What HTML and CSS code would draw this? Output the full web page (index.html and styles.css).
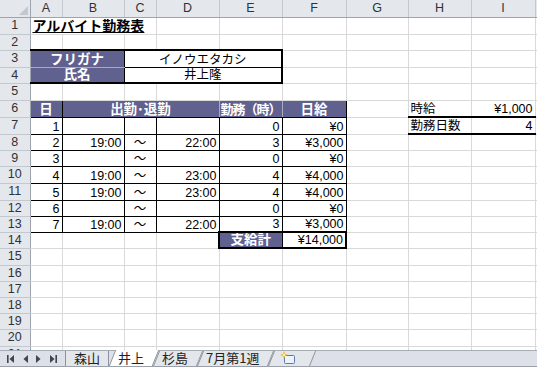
FILE: index.html
```html
<!DOCTYPE html>
<html lang="ja">
<head>
<meta charset="utf-8">
<title>アルバイト勤務表</title>
<link rel="stylesheet" href="styles.css">
</head>
<body>
<div class="sheet">
<table class="grid">
<colgroup>
<col class="w30"><col class="w32"><col class="w62"><col class="w32"><col class="w63"><col class="w63"><col class="w64"><col class="w62"><col class="w63"><col class="w64"><col class="w64">
</colgroup>
<tr class="hdr">
<th class="corner"><svg class="corner-tri" width="9" height="9" viewBox="0 0 9 9"><polygon points="9,0 9,9 0,9" fill="#c3c8cf"/></svg></th>
<th class="ch">A</th><th class="ch">B</th><th class="ch">C</th><th class="ch">D</th><th class="ch">E</th><th class="ch">F</th><th class="ch">G</th><th class="ch">H</th><th class="ch">I</th><th class="ch"></th>
</tr>
<tr class="h17"><th class="rh">1</th><td colspan="3" class="title"><span class="title-text">アルバイト勤務表</span></td><td></td><td></td><td></td><td></td><td></td><td></td><td></td></tr>
<tr class="h16"><th class="rh">2</th><td></td><td></td><td></td><td></td><td></td><td></td><td></td><td></td><td></td><td></td></tr>
<tr class="h17"><th class="rh">3</th><td colspan="2" class="p box-l3">フリガナ</td><td colspan="3" class="box-r3 ctr">イノウエタカシ</td><td></td><td></td><td></td><td></td><td></td></tr>
<tr class="h16"><th class="rh">4</th><td colspan="2" class="p box-l4">氏名</td><td colspan="3" class="box-r4 ctr">井上隆</td><td></td><td></td><td></td><td></td><td></td></tr>
<tr class="h17"><th class="rh">5</th><td></td><td></td><td></td><td></td><td></td><td></td><td></td><td></td><td></td><td></td></tr>
<tr class="h17"><th class="rh">6</th><td class="p hk-a">日</td><td colspan="3" class="p hk-m">出勤･退勤</td><td class="p hk-m work">勤務（時）</td><td class="p hk-f">日給</td><td></td><td class="ul2">時給</td><td class="ul2 num">¥1,000</td><td></td></tr>
<tr class="h17"><th class="rh">7</th><td class="k num">1</td><td class="k num"></td><td class="k ctr"></td><td class="k num"></td><td class="k num">0</td><td class="k num">¥0</td><td></td><td class="ul2">勤務日数</td><td class="ul2 num">4</td><td></td></tr>
<tr class="h16"><th class="rh">8</th><td class="k num">2</td><td class="k num">19:00</td><td class="k ctr">～</td><td class="k num">22:00</td><td class="k num">3</td><td class="k num">¥3,000</td><td></td><td></td><td></td><td></td></tr>
<tr class="h16"><th class="rh">9</th><td class="k num">3</td><td class="k num"></td><td class="k ctr">～</td><td class="k num"></td><td class="k num">0</td><td class="k num">¥0</td><td></td><td></td><td></td><td></td></tr>
<tr class="h17"><th class="rh">10</th><td class="k num">4</td><td class="k num">19:00</td><td class="k ctr">～</td><td class="k num">23:00</td><td class="k num">4</td><td class="k num">¥4,000</td><td></td><td></td><td></td><td></td></tr>
<tr class="h17"><th class="rh">11</th><td class="k num">5</td><td class="k num">19:00</td><td class="k ctr">～</td><td class="k num">23:00</td><td class="k num">4</td><td class="k num">¥4,000</td><td></td><td></td><td></td><td></td></tr>
<tr class="h16"><th class="rh">12</th><td class="k num">6</td><td class="k num"></td><td class="k ctr">～</td><td class="k num"></td><td class="k num">0</td><td class="k num">¥0</td><td></td><td></td><td></td><td></td></tr>
<tr class="h16"><th class="rh">13</th><td class="k num">7</td><td class="k num">19:00</td><td class="k ctr">～</td><td class="k num">22:00</td><td class="k num">3</td><td class="k num">¥3,000</td><td></td><td></td><td></td><td></td></tr>
<tr class="h16"><th class="rh">14</th><td></td><td></td><td></td><td></td><td class="p tot-l">支給計</td><td class="tot-r num">¥14,000</td><td></td><td></td><td></td><td></td></tr>
<tr class="h17"><th class="rh">15</th><td></td><td></td><td></td><td></td><td></td><td></td><td></td><td></td><td></td><td></td></tr>
<tr class="h16"><th class="rh">16</th><td></td><td></td><td></td><td></td><td></td><td></td><td></td><td></td><td></td><td></td></tr>
<tr class="h16"><th class="rh">17</th><td></td><td></td><td></td><td></td><td></td><td></td><td></td><td></td><td></td><td></td></tr>
<tr class="h16"><th class="rh">18</th><td></td><td></td><td></td><td></td><td></td><td></td><td></td><td></td><td></td><td></td></tr>
<tr class="h16"><th class="rh">19</th><td></td><td></td><td></td><td></td><td></td><td></td><td></td><td></td><td></td><td></td></tr>
<tr class="h17"><th class="rh">20</th><td></td><td></td><td></td><td></td><td></td><td></td><td></td><td></td><td></td><td></td></tr>
<tr class="h17"><th class="rh">21</th><td></td><td></td><td></td><td></td><td></td><td></td><td></td><td></td><td></td><td></td></tr>
</table>
</div>
<div class="tabbar">
  <div class="nav">
    <svg width="65" height="16" viewBox="0 0 65 16">
      <rect x="7" y="4" width="1.6" height="8" fill="#3c4654"/>
      <polygon points="14,4 14,12 9.5,8" fill="#3c4654"/>
      <polygon points="28,4 28,12 23.5,8" fill="#3c4654"/>
      <polygon points="36,4 36,12 40.5,8" fill="#3c4654"/>
      <polygon points="50,4 50,12 54.5,8" fill="#3c4654"/>
      <rect x="55.4" y="4" width="1.6" height="8" fill="#3c4654"/>
    </svg>
  </div>
  <div class="tabs">
    <div class="tab first">森山</div>
    <div class="tab active">井上</div>
    <div class="tab">杉島</div>
    <div class="tab">7月第1週</div>
    <div class="tab newtab">
      <svg width="16" height="14" viewBox="0 0 16 14">
        <rect x="4.5" y="4.5" width="10" height="8" rx="1" fill="#eef3fa" stroke="#5b7aa8"/>
        <g fill="#f3b01b">
          <polygon points="4,0 5,3 8,4 5,5 4,8 3,5 0,4 3,3"/>
        </g>
        <circle cx="4" cy="4" r="1.2" fill="#fff2b0"/>
      </svg>
    </div>
  </div>
</div>
</body>
</html>
```

FILE: styles.css
```css
* { box-sizing: border-box; }
html, body { margin: 0; padding: 0; background: #fff; }
body {
  width: 537px;
  height: 369px;
  overflow: hidden;
  font-family: "Liberation Sans", "Noto Sans CJK JP", sans-serif;
  font-size: 12.5px;
  color: #000;
}

.sheet { height: 350px; overflow: hidden; }

.grid {
  border-collapse: collapse;
  table-layout: fixed;
  width: 599px;
}
.w30 { width: 30px; }
.w32 { width: 32px; }
.w62 { width: 62px; }
.w63 { width: 63px; }
.w64 { width: 64px; }

.hdr { height: 17px; }
.h16 { height: 16px; }
.h17 { height: 17px; }

.grid td {
  border: 1px solid #d9d9d9;
  padding: 0 2px;
  white-space: nowrap;
  overflow: hidden;
  line-height: 14px;
  vertical-align: bottom;
}

.grid th {
  background: #e4e7ec;
  color: #2f3337;
  font-weight: normal;
  font-size: 12.5px;
  padding: 0;
  line-height: 15px;
}
.ch {
  border: 1px solid #c3c8cf;
  border-bottom-color: #9ea4ad;
  border-top: none;
}
.rh {
  border: 1px solid #c3c8cf;
  border-right-color: #9ea4ad;
  border-left: none;
  text-align: center;
}
.corner {
  border: 1px solid #9ea4ad;
  border-top: none;
  border-left: none;
  text-align: right;
  vertical-align: bottom;
}
.corner-tri { display: block; margin: 0 2px 2px auto; }

.grid td.title {
  font-size: 14px;
  font-weight: bold;
  overflow: visible;
  line-height: 16px;
}
.title-text {
  text-decoration: underline;
  text-decoration-thickness: 1px;
  text-underline-offset: 1px;
}

.num { text-align: right; }
.ctr { text-align: center; }

.grid td.p {
  background: #616190;
  color: #fff;
  font-weight: bold;
  font-size: 13.5px;
  text-align: center;
  border-color: #616190;
}

/* name box rows 3-4 */
.grid td.box-l3 {
  border-top: 2px solid #000;
  border-right: 1px solid #000;
  border-bottom: 1px solid #a9a9c6;
}
.grid td.box-l4 {
  border-bottom: 2px solid #000;
  border-right: 1px solid #000;
}
.grid td.box-r3 {
  border-top: 2px solid #000;
  border-right: 2px solid #000;
  border-bottom: 1px solid #000;
  border-left: 1px solid #000;
}
.grid td.box-r4 {
  border-bottom: 2px solid #000;
  border-right: 2px solid #000;
  border-left: 1px solid #000;
  border-top: 1px solid #000;
}

/* table header row 6 */
.grid td.hk-a { border-right: 1px solid #000; border-bottom: 1px solid #000; }
.grid td.hk-m { border-right: 1px solid #a9a9c6; border-bottom: 1px solid #000; }
.grid td.hk-f { border-right: 1px solid #000; border-bottom: 1px solid #000; }
.grid td.work { font-size: 13px; letter-spacing: -1px; padding: 0; }

.grid td.k { border: 1px solid #000; }

.grid td.tot-l {
  border: 2px solid #000;
  border-right: 1px solid #000;
}
.grid td.tot-r {
  border: 2px solid #000;
  border-left: 1px solid #000;
}

.grid td.ul2 { border-bottom: 2px solid #000; }

/* sheet tabs */
.tabbar {
  display: flex;
  height: 17px;
  background: #dde1e7;
  border-top: 1px solid #a7adb6;
  border-bottom: 1px solid #9aa1ab;
}
.nav { width: 65px; flex: none; }
.nav svg { display: block; }
.tabs { display: flex; }
.tab {
  position: relative;
  z-index: 0;
  height: 16px;
  padding: 0 9px;
  font-family: "Noto Sans CJK JP", "Liberation Sans", sans-serif;
  font-size: 13px;
  line-height: 16px;
  color: #222;
  margin-top: -1px;
}
.tab::before {
  content: "";
  position: absolute;
  z-index: -1;
  top: 1px;
  bottom: 0;
  left: 3px;
  right: -3px;
  background: #e3e6eb;
  border-left: 1px solid #8b929c;
  border-right: 1px solid #8b929c;
  transform: skewX(-22deg);
}
.tab.first::before {
  left: 0;
  right: 0;
  transform: none;
  border-right: 1px solid #8b929c;
}
.tab.active { z-index: 1; }
.tab.active::before {
  top: 0;
  background: #fff;
  border-color: #8b929c;
}
.newtab { padding: 1px 14px 0 12px; }
.newtab svg { display: block; }
```
